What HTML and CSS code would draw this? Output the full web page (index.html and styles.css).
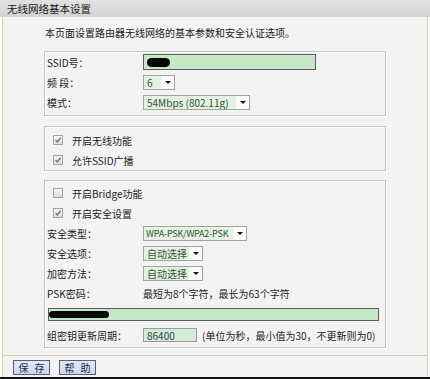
FILE: index.html
```html
<!DOCTYPE html>
<html lang="zh-CN">
<head>
    <meta charset="UTF-8">
    <title>无线网络基本设置</title>
    <link rel="stylesheet" href="styles.css">
</head>
<body>
    <div class="page">
        <div class="title-bar">无线网络基本设置</div>

        <div class="panel">
            <p class="intro">本页面设置路由器无线网络的基本参数和安全认证选项。</p>

            <div class="group group-basic">
                <div class="row">
                    <span class="label">SSID号：</span>
                    <span class="input input-ssid"><span class="blot blot-ssid"></span></span>
                </div>
                <div class="row">
                    <span class="label">频 段：</span>
                    <span class="select select-channel"><span class="select-text">6</span><span class="select-arrow"></span></span>
                </div>
                <div class="row">
                    <span class="label">模式：</span>
                    <span class="select select-mode"><span class="select-text">54Mbps (802.11g)</span><span class="select-arrow"></span></span>
                </div>
            </div>

            <div class="group group-radio">
                <div class="row check-row">
                    <span class="checkbox checked"><svg viewBox="0 0 10 10"><path d="M2 5 L4.2 7.5 L8.2 2.2"/></svg></span>
                    <span>开启无线功能</span>
                </div>
                <div class="row check-row">
                    <span class="checkbox checked"><svg viewBox="0 0 10 10"><path d="M2 5 L4.2 7.5 L8.2 2.2"/></svg></span>
                    <span>允许SSID广播</span>
                </div>
            </div>

            <div class="group group-security">
                <div class="row check-row">
                    <span class="checkbox"></span>
                    <span>开启Bridge功能</span>
                </div>
                <div class="row check-row">
                    <span class="checkbox checked"><svg viewBox="0 0 10 10"><path d="M2 5 L4.2 7.5 L8.2 2.2"/></svg></span>
                    <span>开启安全设置</span>
                </div>
                <div class="row">
                    <span class="label">安全类型：</span>
                    <span class="select select-type"><span class="select-text">WPA-PSK/WPA2-PSK</span><span class="select-arrow"></span></span>
                </div>
                <div class="row">
                    <span class="label">安全选项：</span>
                    <span class="select select-auto"><span class="select-text">自动选择</span><span class="select-arrow"></span></span>
                </div>
                <div class="row">
                    <span class="label">加密方法：</span>
                    <span class="select select-auto"><span class="select-text">自动选择</span><span class="select-arrow"></span></span>
                </div>
                <div class="row">
                    <span class="label">PSK密码：</span>
                    <span class="hint">最短为8个字符，最长为63个字符</span>
                </div>
                <div class="row psk-row">
                    <span class="input input-psk"><span class="blot blot-psk"></span></span>
                </div>
                <div class="row">
                    <span class="label">组密钥更新周期：</span>
                    <span class="input input-period">86400</span>
                    <span class="note">(单位为秒，最小值为30，不更新则为0)</span>
                </div>
            </div>
        </div>

        <div class="button-bar">
            <button class="btn">保 存</button>
            <button class="btn">帮 助</button>
        </div>
    </div>
</body>
</html>
```

FILE: styles.css
```css
body {
    margin: 0;
    background: #fff;
    font-family: "Noto Sans CJK SC", "DejaVu Sans", sans-serif;
    font-size: 10px;
    color: #222;
}
.page {
    width: 430px;
    height: 379px;
    box-sizing: border-box;
    border-bottom: 2px solid #111;
    display: flex;
    flex-direction: column;
}
.title-bar {
    height: 17px;
    line-height: 17px;
    padding-left: 7px;
    background: linear-gradient(#e1e1e1, #d3d3d3);
    font-size: 10.5px;
    color: #1a1a1a;
}
.panel {
    margin: 0 2px;
    padding: 8px 0 7px 41px;
    background: #f3f3f3;
    border-left: 1px solid #dccba6;
    border-right: 1px solid #dccba6;
    border-bottom: 1px solid #dccba6;
}
.intro {
    margin: 0 0 10px 1px;
    line-height: 16px;
}
.group {
    width: 342px;
    box-sizing: border-box;
    border: 1px solid #c4c4c4;
    box-shadow: inset 1px 1px 0 #fff, 1px 1px 0 #fff;
    padding: 0 0 3px 2px;
}
.group-radio {
    margin-top: 10px;
    padding: 3px 0 0 2px;
}
.group-security {
    margin-top: 9px;
    padding: 2px 0 2px 2px;
}
.row {
    display: flex;
    align-items: center;
    height: 20px;
}
.label {
    width: 96px;
    flex-shrink: 0;
}
.check-row {
    padding-left: 6px;
}
.checkbox {
    width: 10px;
    height: 10px;
    box-sizing: border-box;
    margin-right: 9px;
    border: 1px solid #a3a3a3;
    background: linear-gradient(#f6f6f6, #dedede);
}
.checkbox svg {
    display: block;
    width: 8px;
    height: 8px;
}
.checkbox path {
    fill: none;
    stroke: #5f7488;
    stroke-width: 1.6;
}
.input {
    box-sizing: border-box;
    display: flex;
    align-items: center;
    background: #c6e8c8;
    border: 1px solid #5d5d5d;
}
.input-ssid {
    width: 173px;
    height: 16px;
}
.input-psk {
    margin-left: 1px;
    width: 331px;
    height: 13px;
}
.input-period {
    width: 54px;
    height: 14px;
    padding-left: 3px;
    background: #d3ecd4;
    border-color: #9c9c9c;
    color: #34425a;
}
.blot {
    background: #050505;
    border-radius: 5px;
}
.blot-ssid {
    width: 23px;
    height: 9px;
    margin-left: 3px;
}
.blot-psk {
    width: 60px;
    height: 7px;
    border-radius: 4px;
}
.select {
    box-sizing: border-box;
    display: flex;
    align-items: center;
    height: 15px;
    border: 1px solid #a2a2a2;
    background: #fafafa;
}
.select-text {
    flex: 1;
    height: 100%;
    line-height: 13px;
    padding-left: 3px;
    background: #e5f1e2;
    color: #2f5632;
    white-space: nowrap;
    overflow: hidden;
}
.select-arrow {
    width: 13px;
    flex-shrink: 0;
    height: 100%;
    position: relative;
}
.select-arrow::after {
    content: "";
    position: absolute;
    left: 4px;
    top: 5px;
    border-left: 3px solid transparent;
    border-right: 3px solid transparent;
    border-top: 3px solid #111;
}
.select-channel {
    width: 32px;
}
.select-mode {
    width: 107px;
}
.select-type {
    width: 104px;
}
.select-type .select-text {
    font-size: 9px;
    letter-spacing: -0.2px;
    padding-left: 2px;
}
.select-auto {
    width: 60px;
}
.hint {
    color: #222;
}
.psk-row {
    height: 22px;
}
.note {
    margin-left: 5px;
    white-space: nowrap;
}
.button-bar {
    flex: 1;
    margin: 0 2px;
    display: flex;
    align-items: flex-end;
    gap: 9px;
    padding: 0 0 2px 10px;
    background: #f3f3f3;
    border-left: 1px solid #dccba6;
    border-right: 1px solid #dccba6;
}
.btn {
    width: 37px;
    height: 15px;
    padding: 0;
    border: 1px solid #4f5f80;
    background: linear-gradient(#e2e9f2, #cfd9e6);
    font-family: "Noto Sans CJK SC", sans-serif;
    font-size: 10px;
    line-height: 13px;
    letter-spacing: 2px;
    text-indent: 2px;
    color: #1c2b58;
}
```
